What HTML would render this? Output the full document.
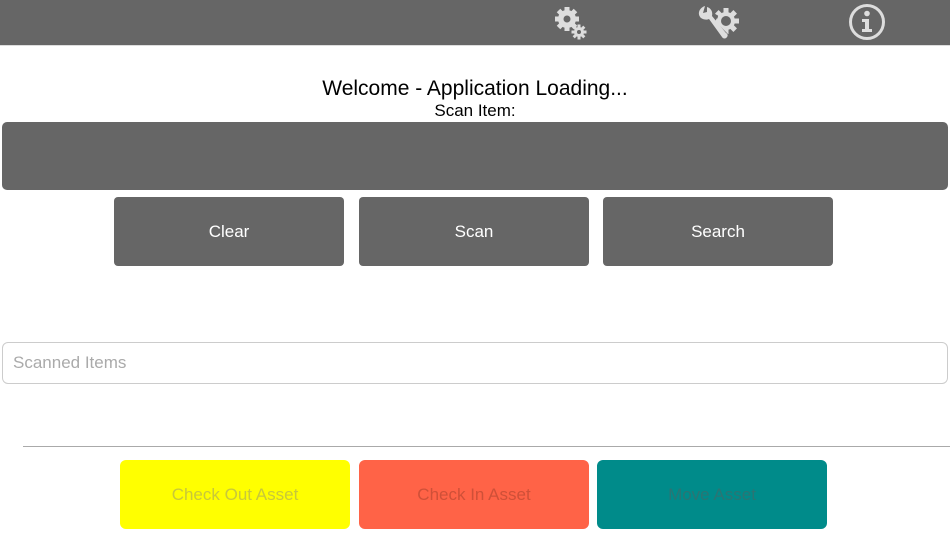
<!DOCTYPE html>
<html><head><meta charset="utf-8"><style>
*{margin:0;padding:0;box-sizing:border-box}
body{width:950px;height:534px;background:#fff;font-family:"Liberation Sans",sans-serif;position:relative;overflow:hidden}
.top{position:absolute;left:0;top:0;width:950px;height:46px;background:#666;border-bottom:1px solid #ddd}
.abs{position:absolute}
.btn{position:absolute;background:#666;border-radius:4px;color:#fff;font-size:17px;display:flex;align-items:center;justify-content:center}
.ab{position:absolute;top:460px;width:230px;height:69px;border-radius:6px;font-size:17px;display:flex;align-items:center;justify-content:center}
</style></head><body>
<div class="top"></div>
<svg class="abs" style="left:553px;top:5px" width="36" height="36" viewBox="0 0 36 36">
<g fill="#ddd">
<circle cx="14" cy="14" r="9"/>
<g transform="translate(14 14)"><rect x="-2.5" y="-12" width="5" height="24"/><rect x="-2.5" y="-12" width="5" height="24" transform="rotate(45)"/><rect x="-2.5" y="-12" width="5" height="24" transform="rotate(90)"/><rect x="-2.5" y="-12" width="5" height="24" transform="rotate(135)"/></g>
<circle cx="26" cy="27" r="5"/>
<g transform="translate(26 27)"><rect x="-1.5" y="-7.5" width="3" height="15"/><rect x="-1.5" y="-7.5" width="3" height="15" transform="rotate(45)"/><rect x="-1.5" y="-7.5" width="3" height="15" transform="rotate(90)"/><rect x="-1.5" y="-7.5" width="3" height="15" transform="rotate(135)"/></g>
</g>
<circle cx="14" cy="14" r="3.5" fill="#666"/><circle cx="26" cy="27" r="2" fill="#666"/>
</svg>
<svg class="abs" style="left:695px;top:2px" width="50" height="42" viewBox="0 0 50 42">
<g fill="#ddd">
<circle cx="31" cy="19" r="9"/>
<g transform="translate(31 19)"><rect x="-2.5" y="-13" width="5" height="26"/><rect x="-2.5" y="-13" width="5" height="26" transform="rotate(45)"/><rect x="-2.5" y="-13" width="5" height="26" transform="rotate(90)"/><rect x="-2.5" y="-13" width="5" height="26" transform="rotate(135)"/></g>
</g>
<circle cx="31" cy="19" r="5" fill="#666"/>
<path d="M20 12 L16 20 L34 38" stroke="#666" stroke-width="7" fill="none"/>
<path d="M10 4 C4 6 2 12 6 16 C9 18 12 18 14 17 L27 35 C28 37 31 37 32 35 C33 34 33 32 31 31 L17 14 C18 10 16 6 12 5 L12 10 L8 11 Z" fill="#ddd"/>
</svg>
<svg class="abs" style="left:848px;top:3px" width="38" height="38" viewBox="0 0 38 38">
<circle cx="19" cy="19" r="16.5" fill="none" stroke="#ddd" stroke-width="3"/>
<circle cx="19" cy="10.5" r="2.8" fill="#ddd"/>
<path d="M14 16h7v10h3v3h-10v-3h3v-7h-3z" fill="#ddd"/>
</svg>
<div class="abs" style="left:0;width:950px;top:77px;text-align:center;font-size:21px;color:#000">Welcome - Application Loading...</div>
<div class="abs" style="left:0;width:950px;top:101px;text-align:center;font-size:17px;color:#000">Scan Item:</div>
<div class="abs" style="left:2px;top:122px;width:946px;height:68px;background:#666;border-radius:5px"></div>
<div class="btn" style="left:114px;top:197px;width:230px;height:69px">Clear</div>
<div class="btn" style="left:359px;top:197px;width:230px;height:69px">Scan</div>
<div class="btn" style="left:603px;top:197px;width:230px;height:69px">Search</div>
<div class="abs" style="left:2px;top:342px;width:946px;height:42px;border:1px solid #ccc;border-radius:6px;color:#aaa;font-size:17px;padding:10px 0 0 10px">Scanned Items</div>
<div class="abs" style="left:23px;top:446px;width:927px;height:1px;background:#aaa"></div>
<div class="ab" style="left:120px;background:#ffff00;color:#c8c83a">Check Out Asset</div>
<div class="ab" style="left:359px;background:#ff6347;color:#cf5038">Check In Asset</div>
<div class="ab" style="left:597px;background:#008b8a;color:#2a7574">Move Asset</div>
</body></html>
